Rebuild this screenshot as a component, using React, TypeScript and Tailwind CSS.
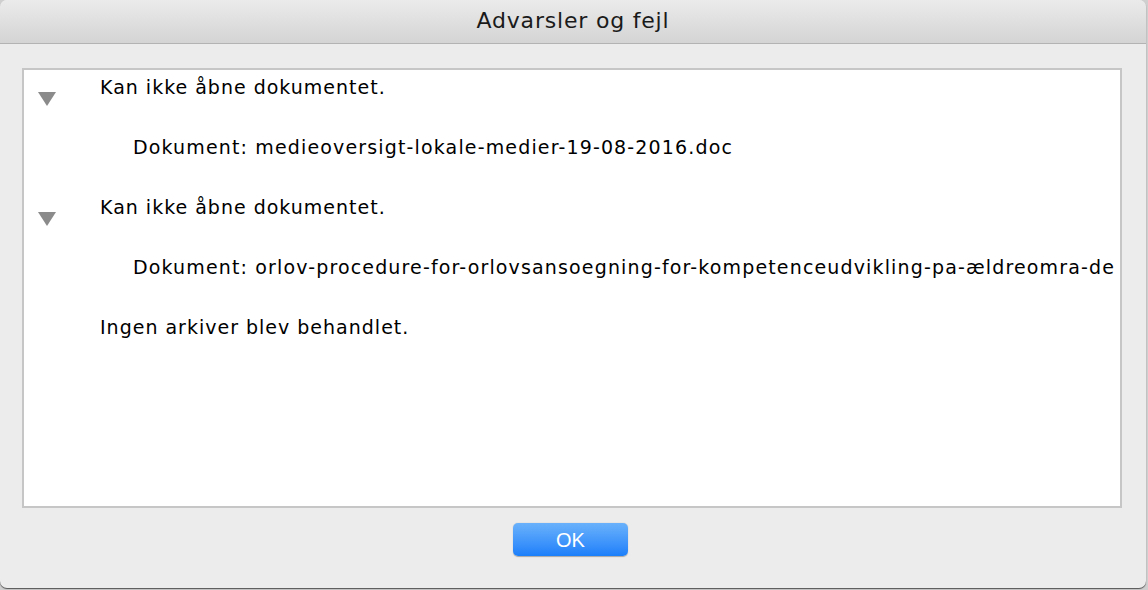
const rows = [
  {
    head: "Kan ikke åbne dokumentet.",
    detail: "Dokument: medieoversigt-lokale-medier-19-08-2016.doc",
  },
  {
    head: "Kan ikke åbne dokumentet.",
    detail:
      "Dokument: orlov-procedure-for-orlovsansoegning-for-kompetenceudvikling-pa-ældreomra-de",
  },
];

function Disclosure() {
  return (
    <svg width="18" height="14" viewBox="0 0 18 14" className="block">
      <path d="M0 0 L18 0 L9 14 Z" fill="#8b8b8b" />
    </svg>
  );
}

export default function App() {
  return (
    <div className="h-[590px] w-[1148px] overflow-hidden bg-[#cfcfcf]">
      <div className="flex h-[588px] w-[1146px] flex-col overflow-hidden rounded-[7px] bg-[#ececec] shadow-[0_1px_1px_rgba(0,0,0,0.6)]">
        <div className="flex h-[44px] shrink-0 items-center justify-center border-b border-[#b3b3b3] bg-gradient-to-b from-[#ebebeb] to-[#d4d4d4] pb-[3px]">
          <span className="font-['DejaVu_Sans',sans-serif] text-[22px] tracking-[0.8px] text-[#1a1a1a]">
            Advarsler og fejl
          </span>
        </div>
        <div className="ml-[22px] mt-[24px] h-[440px] w-[1100px] overflow-hidden border-2 border-[#c6c6c6] bg-white pt-[5px] font-['DejaVu_Sans',sans-serif] text-[19px] leading-6 tracking-[1px] text-black">
          <div className="flex flex-col gap-9">
            {rows.map((row, i) => (
              <div key={i} className="flex">
                <div className="w-[76px] shrink-0 pl-[14px] pt-[17px]">
                  <Disclosure />
                </div>
                <div className="flex flex-col gap-9 whitespace-nowrap">
                  <p>{row.head}</p>
                  <p className="pl-[33px] tracking-[1.15px]">{row.detail}</p>
                </div>
              </div>
            ))}
            <p className="pl-[76px]">Ingen arkiver blev behandlet.</p>
          </div>
        </div>
        <div className="mt-[15px] flex justify-center pr-[5px]">
          <button className="h-[33px] w-[115px] rounded-[5px] bg-gradient-to-b from-[#69b1fb] to-[#1a7ffa] font-['Liberation_Sans',sans-serif] text-[20px] text-white shadow-[0_0.5px_1px_rgba(0,0,0,0.3)]">
            OK
          </button>
        </div>
      </div>
    </div>
  );
}
